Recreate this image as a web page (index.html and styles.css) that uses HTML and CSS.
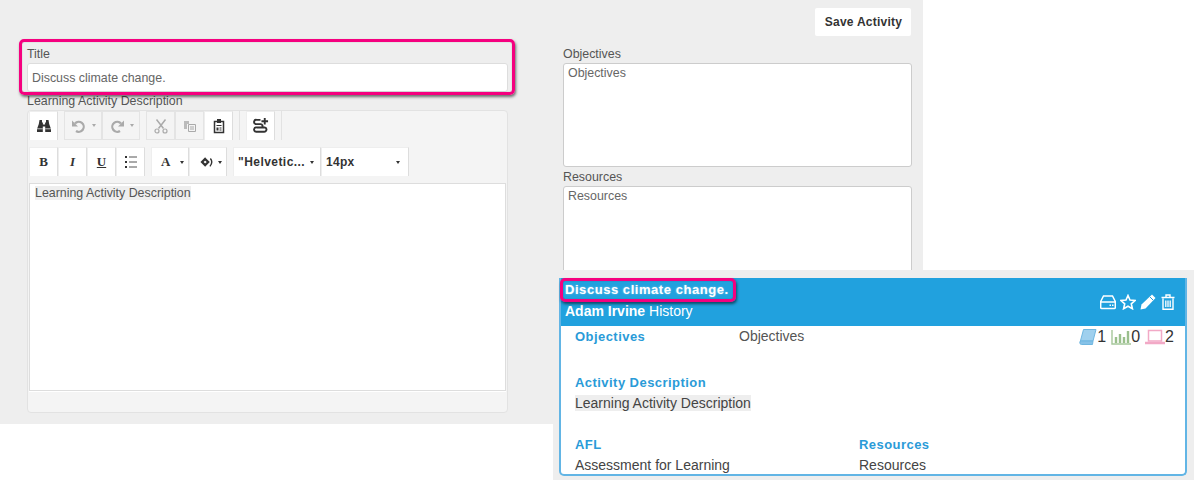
FILE: index.html
```html
<!DOCTYPE html>
<html lang="en">
<head>
<meta charset="utf-8">
<title>Learning Activity</title>
<link rel="stylesheet" href="styles.css">
</head>
<body>
<main class="panel">
  <div class="topbar"><button class="save" type="button">Save Activity</button></div>
  <div class="form">
    <section class="col">
      <label class="lbl">Title</label>
      <div class="input">Discuss climate change.</div>
      <label class="lbl lbl-desc">Learning Activity Description</label>
      <div class="editor">
        <div class="toolbar">
          <div class="group"><span class="tool"><svg class="ic" viewBox="0 0 16 16"><path fill="#333" d="M3.500 2H6v2.500h.9V6.500h2.200V4.500h.9V2h2.500l.7 4 1.800 5V14H9.200V8.500H6.800V14H1v-3l1.800-5z"/><path stroke="#fff" stroke-width=".7" d="M1 10.800h5.800M9.200 10.800H15"/></svg></span></div>
          <div class="group">
            <span class="tool tool-off wide"><svg class="ic" viewBox="0 0 16 16"><path fill="none" stroke="#aaa" stroke-width="2.200" d="M4 5.500a5 5 0 1 1 1 7.500"/><path fill="#aaa" d="M1 2.500v6h6z"/></svg><i class="caret caret-off"></i></span>
            <span class="tool tool-off wide"><svg class="ic" viewBox="0 0 16 16"><path fill="none" stroke="#aaa" stroke-width="2.200" d="M12 5.500a5 5 0 1 0-1 7.500"/><path fill="#aaa" d="M15 2.500v6H9z"/></svg><i class="caret caret-off"></i></span>
          </div>
          <div class="group">
            <span class="tool tool-off"><svg class="ic" viewBox="0 0 16 16"><path fill="none" stroke="#aaa" stroke-width="1.500" d="M3.500 1.500l7 9M12.500 1.500l-7 9"/><circle cx="4" cy="13" r="2" fill="none" stroke="#aaa" stroke-width="1.200"/><circle cx="12" cy="13" r="2" fill="none" stroke="#aaa" stroke-width="1.200"/></svg></span>
            <span class="tool tool-off"><svg class="ic" viewBox="0 0 16 16"><path fill="#bbb" d="M2 3h5v3H5v5H2z"/><path fill="none" stroke="#aaa" d="M6.500 6.500h7v7h-7z"/><path stroke="#aaa" d="M8 9h4M8 11h4"/></svg></span>
            <span class="tool"><svg class="ic" viewBox="0 0 16 16"><path fill="none" stroke="#333" stroke-width="1.500" d="M3.500 3.500h9v11h-9z"/><path fill="#333" d="M6 1h4v4H6zM5.500 7h5v1h-5zM5.500 9.500h2v3h-2zM8.500 9.500h2v1h-2zM8.500 11.500h2v1h-2z"/></svg></span>
          </div>
          <i class="sep"></i>
          <div class="group"><span class="tool"><svg class="ic ic-link" viewBox="0 0 18 18"><path fill="none" stroke="#333" stroke-width="2" d="M9 2H5a2.300 2.300 0 0 0-1 4.500h5a2 2 0 0 1 1.500 3.500H5a2.300 2.300 0 0 0-1 4.500h8.500a2.300 2.300 0 0 0 1-4.500H9"/><path fill="#333" d="M12.500 0H14.500V2.500H17V4.500H14.500V7H12.500V4.500H10V2.500H12.500z"/></svg></span></div>
          <i class="sep"></i>
        </div>
        <div class="toolbar toolbar-second">
          <div class="group">
            <span class="tool serif"><b>B</b></span>
            <span class="tool serif"><b><em>I</em></b></span>
            <span class="tool serif"><b class="under">U</b></span>
            <span class="tool"><svg class="ic" viewBox="0 0 16 16"><path fill="#333" d="M2 2h2v2H2zM2 7h2v2H2zM2 12h2v2H2z"/><path stroke="#555" d="M6 3h8M6 8h8M6 13h8"/></svg></span>
          </div>
          <div class="group">
            <span class="tool tool-color serif"><b>A</b><i class="caret"></i></span>
            <span class="tool tool-color"><svg class="ic ic-small" viewBox="0 0 16 16"><path fill="none" stroke="#333" stroke-width="2.600" d="M7 4.500l3.500 3.500L7 11.500 3.500 8z"/><path fill="none" stroke="#333" stroke-width="1.600" d="M13 4c2 2.500 2 6-.5 9"/></svg><i class="caret"></i></span>
          </div>
          <div class="group">
            <span class="tool tool-select font-name">"Helvetic...<i class="caret"></i></span>
            <span class="tool tool-select font-size">14px<i class="caret"></i></span>
          </div>
        </div>
        <div class="edit"><span class="hl">Learning Activity Description</span></div>
        <div class="status"></div>
      </div>
    </section>
    <section class="col">
      <label class="lbl">Objectives</label>
      <div class="area">Objectives</div>
      <label class="lbl lbl-res">Resources</label>
      <div class="area">Resources</div>
    </section>
  </div>
</main>

<div class="mark mark-title"></div>

<aside class="preview">
  <div class="card">
    <header class="card-head">
      <div class="head-text">
        <h2 class="card-title">Discuss climate change.</h2>
        <p class="card-sub"><b>Adam Irvine</b> History</p>
      </div>
      <div class="actions">
        <svg class="act" viewBox="0 0 16 16"><path fill="none" stroke="#fff" stroke-width="1.500" d="M3.500 2h9l2.800 5.500V13.500a1 1 0 0 1-1 1H1.700a1 1 0 0 1-1-1V7.500zM1 8h14"/><path stroke="#fff" stroke-width="1.500" d="M9.500 11.300h1.500M12 11.300h1.500"/></svg>
        <svg class="act" viewBox="0 0 16 16"><path fill="none" stroke="#fff" stroke-width="1.600" d="M8 1.500l2 4.500 5 .5-3.700 3.300 1.100 4.900L8 12.200l-4.400 2.500 1.100-4.900L1 6.500l5-.5z"/></svg>
        <svg class="act" viewBox="0 0 16 16"><path fill="#fff" d="M12 .5L15.500 4 5.500 14.500 .5 15.500l1-5z"/><path stroke="#21a1de" d="M10 3l3 3"/></svg>
        <svg class="act" viewBox="0 0 16 16"><path fill="none" stroke="#fff" stroke-width="1.400" d="M3 4.500v10.800h10V4.500M1.500 3.500h13M6 3.500V1h4v2.500"/><path stroke="#fff" stroke-width="1.300" d="M5.800 6.500v6.500M8 6.500v6.500M10.200 6.500v6.500"/></svg>
      </div>
    </header>
    <div class="card-body">
      <div class="row-top">
        <b class="key key-obj">Objectives</b>
        <span class="val">Objectives</span>
        <div class="counts">
          <svg class="cnt cnt-book" viewBox="0 0 18 16"><path fill="#9fd0ee" stroke="#6fb6e0" d="M4.500 .5H17l-3 11.500H2.500a1.500 1.500 0 0 0-1.500 1.500z"/><path fill="#86c2e8" stroke="#6fb6e0" d="M1 13.500A1.500 1.500 0 0 1 2.500 12H14l-.5 3.500H2.500A1.500 1.500 0 0 1 1 13.500z"/></svg><span>1</span>
          <svg class="cnt cnt-chart" viewBox="0 0 20 16"><path fill="none" stroke="#a5c79a" stroke-width="1.400" d="M1 1v14h19"/><path stroke="#9abf8c" stroke-width="2.400" d="M5 14V8M9 14V5M13 14V8M17 14V2"/></svg><span>0</span>
          <svg class="cnt cnt-lap" viewBox="0 0 20 16"><path fill="none" stroke="#f2a9c6" stroke-width="1.500" d="M3.500 1.500h13V12h-13z"/><path stroke="#f2a9c6" stroke-width="2.400" d="M0 14h20"/></svg><span>2</span>
        </div>
      </div>
      <b class="key key-desc">Activity Description</b>
      <div class="desc"><span class="hl">Learning Activity Description</span></div>
      <div class="bottom">
        <div>
          <b class="key">AFL</b>
          <div class="line">Assessment for Learning</div>
        </div>
        <div>
          <b class="key">Resources</b>
          <div class="line">Resources</div>
        </div>
      </div>
    </div>
  </div>
  <div class="mark mark-card"></div>
</aside>
</body>
</html>
```
FILE: styles.css
```css
* { box-sizing: border-box; }
html, body { margin: 0; height: 480px; overflow: hidden; background: #fff; }
body {
  position: relative;
  width: 1194px;
  font: 12.4px/17px "Liberation Sans", Arial, sans-serif;
  color: #555;
}
.panel { width: 923px; height: 424px; padding: 8px 12px 0 27px; background: #eee; }
.topbar { display: flex; justify-content: flex-end; height: 38px; }
.save {
  width: 96px; height: 28px; padding: 0 0 0 1px; border: 0; border-radius: 2px;
  background: #fff; color: #333;
  font: bold 12px "Liberation Sans", Arial, sans-serif; letter-spacing: .25px;
}
.form { display: grid; grid-template-columns: 481px 349px; column-gap: 55px; }
.col { display: flex; flex-direction: column; }
.lbl { display: block; height: 17px; color: #555; }
.lbl-desc { margin-top: 1px; }
.lbl-res { margin-top: 2px; }
.input {
  height: 29px; padding: 6px 4px; background: #fff;
  border: 1px solid #ddd; border-radius: 3px; color: #666;
}
.area {
  height: 104px; padding: 1px 4px; background: #fff;
  border: 1px solid #ccc; border-radius: 3px; color: #666;
}
.editor {
  height: 303px; padding: 0 1px; background: #f4f4f4;
  border: 1px solid #e2e2e2; border-radius: 4px;
  display: flex; flex-direction: column;
}
.toolbar { display: flex; height: 29px; gap: 6px; }
.toolbar-second { margin-top: 7px; }
.group { display: flex; }
.sep { width: 1px; height: 29px; background: #e2e2e2; }
.tool {
  display: flex; align-items: center; justify-content: center; gap: 5px;
  width: 29px; height: 29px; background: #fff; color: #333;
  border-right: 1px solid #ddd; border-top: 1px solid #eee; border-left: 1px solid #eee;
}
.tool-off { background: #f4f4f4; border: 1px solid #e4e4e4; }
.wide { width: 38px; }
.tool-color { width: 38px; justify-content: space-between; padding: 0 4px 0 9px; }
.tool-select {
  justify-content: space-between; padding: 0 9px 0 4px;
  font: bold 12px "Liberation Sans", Arial, sans-serif; color: #333;
}
.font-name { width: 88px; letter-spacing: .45px; padding-right: 9px; }
.font-size { width: 88px; letter-spacing: .3px; padding-right: 8px; }
.ic { width: 16px; height: 16px; display: block; }
.ic-small { width: 14px; height: 14px; }
.ic-link { width: 17px; height: 17px; }
.serif { font: bold 13px "Liberation Serif", "Times New Roman", serif; }
.under { text-decoration: underline; }
.caret { width: 0; height: 0; border: 2.500px solid transparent; border-top: 3px solid #333; border-bottom: 0; flex: none; }
.caret-off { border-top-color: #aaa; }
.edit {
  height: 208px; margin-top: 7px; padding: 1px 5px; background: #fff;
  border: 1px solid #ddd; color: #555;
}
.status { flex: 1; border-top: 1px solid #fff; }
.hl { background: #eee; }

.mark {
  position: absolute; border: 3px solid #f5007f; border-radius: 5px;
  box-shadow: 1px 2px 3px rgba(0, 0, 0, .55), inset 0 0 1px rgba(0, 0, 0, .4);
  pointer-events: none;
}
.mark-title { left: 19px; top: 39px; width: 496px; height: 56px; }
.mark-card { left: 7px; top: 8px; width: 176px; height: 24px; }

.preview {
  position: absolute; left: 553px; top: 270px; width: 641px; height: 210px;
  padding: 8px 7px 4px 6px; background: #eee;
}
.card {
  height: 198px; background: #fff; overflow: hidden;
  border: 2px solid #62b5e5; border-top: 0; border-radius: 0 0 5px 5px;
}
.card-head {
  display: flex; justify-content: space-between; height: 48px;
  margin: 0 -2px; padding: 3px 11px 0 6px; background: #21a1de; color: #fff;
}
.card-title { margin: 0; font: bold 13px/17px "Liberation Sans", Arial, sans-serif; letter-spacing: .55px; text-shadow: 0 0 2px rgba(255, 255, 255, .5); }
.card-sub { margin: 5px 0 0; font-size: 14px; line-height: 17px; }
.actions { display: flex; gap: 4px; margin-top: 13px; height: 16px; }
.act { width: 16px; height: 16px; display: block; }
.card-body { padding: 1px 0 0 14px; color: #444; font-size: 14px; }
.row-top { position: relative; display: flex; height: 17px; margin-top: 1px; }
.key { display: block; color: #2a9bd8; font-size: 13px; line-height: 17px; letter-spacing: .45px; }
.key-obj { width: 164px; }
.key-desc { margin-top: 29px; }
.val { color: #555; }
.counts { position: absolute; right: 11px; top: 0; display: flex; align-items: center; color: #333; font-size: 16px; }
.cnt { display: block; height: 16px; }
.cnt-book { width: 18px; }
.cnt-chart { width: 20px; margin-left: 5px; }
.cnt-lap { width: 20px; margin-left: 5px; }
.desc { margin-top: 4px; color: #444; }
.bottom { display: grid; grid-template-columns: 284px 1fr; margin-top: 24px; }
.line { margin-top: 4px; color: #444; }
```
